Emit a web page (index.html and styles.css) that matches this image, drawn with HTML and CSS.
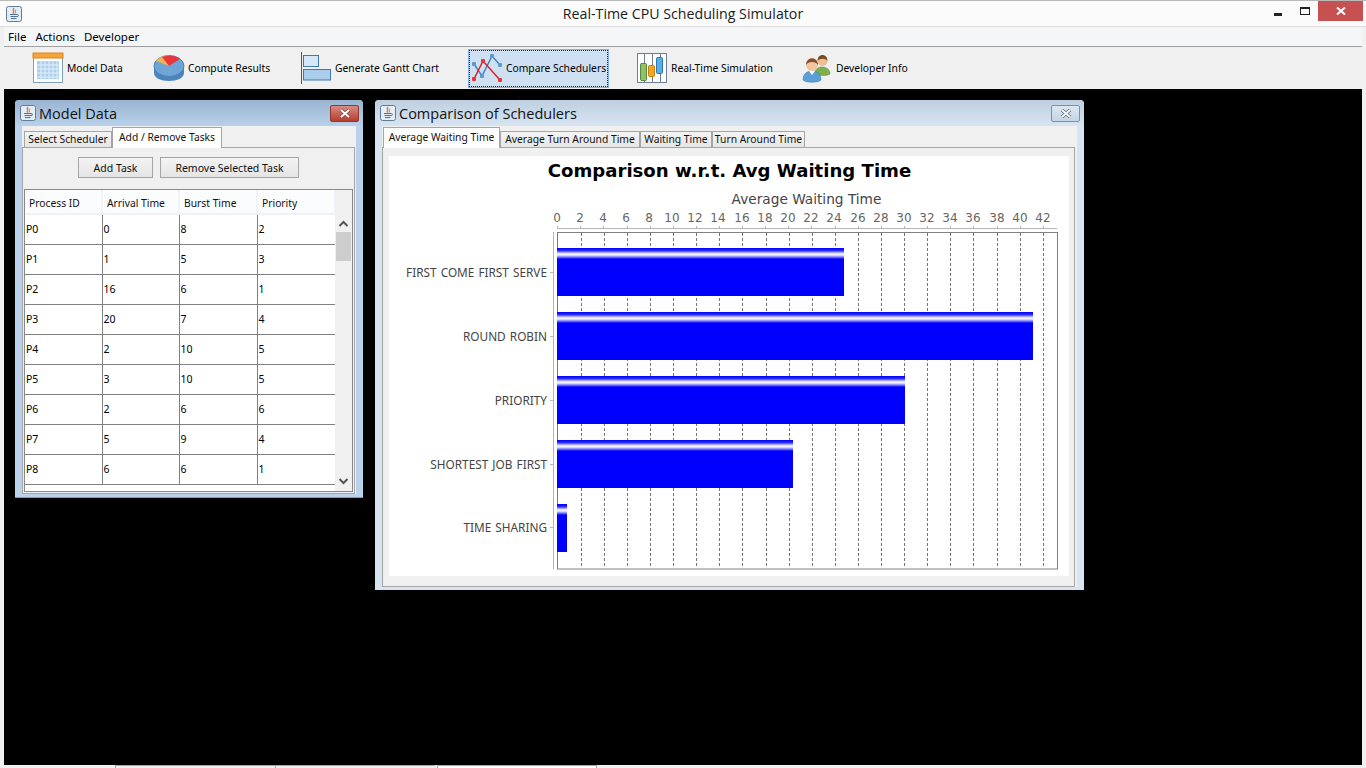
FILE: index.html
```html
<!DOCTYPE html>
<html lang="en">
<head>
  <meta charset="UTF-8" />
  <title>Real-Time CPU Scheduling Simulator</title>
  <link rel="stylesheet" href="styles.css">
</head>
<body>
  <svg class="defs" width="0" height="0">
    <defs>
      <symbol id="java" viewBox="0 0 16 16">
        <rect x="0.5" y="0.5" width="15" height="15" rx="2" fill="#e4ecf4" stroke="#5f7d9b"/>
        <path d="M8 2C6 4 9 5 7 7.500" fill="none" stroke="#e2762a" stroke-width="1.400"/>
        <path d="M10 3.500C8.500 5 10.500 5.500 9 7.500" fill="none" stroke="#e2762a"/>
        <path d="M4 8.500h7M4.500 10.500h6.500M5 12.500h5.500" stroke="#4d6f92"/>
        <path d="M11 8.500c2 0 2 2 0 2" fill="none" stroke="#4d6f92"/>
      </symbol>
      <linearGradient id="barShine" x1="0" y1="0" x2="0" y2="1">
        <stop offset="0" stop-color="#0000ff"/>
        <stop offset="0.05" stop-color="#2222ff"/>
        <stop offset="0.125" stop-color="#ffffff"/>
        <stop offset="0.16" stop-color="#ccccff"/>
        <stop offset="0.23" stop-color="#0000ff"/>
        <stop offset="1" stop-color="#0000ff"/>
      </linearGradient>
    </defs>
  </svg>

  <div class="frame">
    <header class="titlebar">
      <svg class="app-icon" width="16" height="16"><use href="#java"/></svg>
      <span class="app-title">Real-Time CPU Scheduling Simulator</span>
      <div class="win-controls">
        <span class="win-min"></span>
        <span class="win-max"></span>
        <span class="win-close">
          <svg width="10" height="8" viewBox="0 0 10 8"><path d="M1 0.500L9 7.500M9 0.500L1 7.500" stroke="#fff" stroke-width="2"/></svg>
        </span>
      </div>
    </header>

    <nav class="menubar">
      <span>File</span>
      <span>Actions</span>
      <span>Developer</span>
    </nav>

    <div class="toolbar">
      <div class="tool tool-model">
        <svg width="32" height="32" viewBox="0 0 32 32">
          <rect x="1.500" y="1.500" width="29" height="29" fill="#fff" stroke="#7f9db9"/>
          <rect x="1" y="1" width="30" height="5" fill="#f6a53c" stroke="#dd8420"/>
          <rect x="5" y="9" width="22" height="18" fill="#a9d0f0"/>
          <path d="M5 13h24M5 17h24M5 21h24M5 25h24M9 9v20M13 9v20M17 9v20M21 9v20M25 9v20" stroke="#e8eef5" stroke-width="1"/>
        </svg>
        <span>Model Data</span>
      </div>
      <div class="tool tool-results">
        <svg width="32" height="28" viewBox="0 0 32 28">
          <path d="M1 13v6c0 5 7 8 15 8s15-3 15-8v-6z" fill="#4a86bd"/>
          <ellipse cx="16" cy="12" rx="15" ry="10.500" fill="#6fa5d6" stroke="#4d83b3"/>
          <path d="M16 12L3 7C6 3 11 1.500 16 1.500z" fill="#eeb15c"/>
          <path d="M16 12L9 3C14 1 23 1 27 5z" fill="#e8383a"/>
        </svg>
        <span>Compute Results</span>
      </div>
      <div class="tool tool-gantt">
        <svg width="32" height="32" viewBox="0 0 32 32">
          <path d="M1.500 0v32" stroke="#555" stroke-width="1"/>
          <rect x="3.500" y="3.500" width="15" height="11" fill="#d5e8f7" stroke="#3f79ad"/>
          <rect x="3.500" y="17.500" width="27" height="10.500" fill="#a9cdea" stroke="#3f79ad"/>
        </svg>
        <span>Generate Gantt Chart</span>
      </div>
      <div class="tool tool-compare">
        <svg width="32" height="30" viewBox="0 0 32 30">
          <path d="M3 11L11 23L21 3L29 12" fill="none" stroke="#3f83c0" stroke-width="1.500"/>
          <path d="M3 26L12 8L29 27" fill="none" stroke="#dd2222" stroke-width="1.500"/>
          <g fill="#5c9bd1">
            <rect x="1" y="9" width="4" height="4" rx="1"/>
            <rect x="9" y="21" width="4" height="4" rx="1"/>
            <rect x="19" y="1" width="4" height="4" rx="1"/>
            <rect x="27" y="10" width="4" height="4" rx="1"/>
          </g>
          <g fill="#ee3333">
            <rect x="1" y="24" width="4" height="4" rx="1"/>
            <rect x="10" y="6" width="4" height="4" rx="1"/>
            <rect x="27" y="25" width="4" height="4" rx="1"/>
          </g>
        </svg>
        <span>Compare Schedulers</span>
      </div>
      <div class="tool tool-sim">
        <svg width="30" height="30" viewBox="0 0 30 30">
          <rect x="0.500" y="0.500" width="29" height="29" fill="#fff" stroke="#6d7f91"/>
          <path d="M7.500 1v28M15.500 1v28M23.500 1v28" stroke="#6d7f91"/>
          <rect x="3.500" y="10.500" width="6" height="17" rx="1" fill="#8fc06d" stroke="#4f8a36"/>
          <rect x="11.500" y="12.500" width="6" height="11" rx="1" fill="#f5a623" stroke="#c97f10"/>
          <rect x="19.500" y="4.500" width="6" height="16" rx="1" fill="#5aaee6" stroke="#2a78b0"/>
        </svg>
        <span>Real-Time Simulation</span>
      </div>
      <div class="tool tool-dev">
        <svg width="30" height="30" viewBox="0 0 30 30">
          <path d="M13 21c0-5 3-7 7-7s8 2 8 7c-3 2-12 2-15 0z" fill="#7fae4c" stroke="#5e8a33" stroke-width="0.500"/>
          <circle cx="20.500" cy="8" r="5" fill="#eebd91"/>
          <path d="M15.500 8c0-8 10-8 10 0c-2-3-8-3-10 0z" fill="#7a4a22"/>
          <path d="M1 27c0-6 4-9 9-9s9 3 9 9c-3 3-15 3-18 0z" fill="#5a9fd8" stroke="#2f74ad" stroke-width="0.500"/>
          <path d="M7 18l3 4l3-4z" fill="#fff"/>
          <circle cx="10" cy="12" r="6" fill="#f2c59b"/>
          <path d="M4 12c0-9 12-9 12 0c-2-4-10-4-12 0z" fill="#84512a"/>
        </svg>
        <span>Developer Info</span>
      </div>
    </div>

    <main class="desktop">
      <section class="inner-window model-window">
        <div class="inner-title">
          <svg width="16" height="16"><use href="#java"/></svg>
          <span class="inner-name">Model Data</span>
          <span class="inner-close">
            <svg width="14" height="11" viewBox="0 0 14 11"><path d="M3 2L11 9M11 2L3 9" stroke="#7c4640" stroke-width="3.400"/><path d="M3 2L11 9M11 2L3 9" stroke="#fff" stroke-width="2"/></svg>
          </span>
        </div>
        <div class="inner-body">
          <div class="tabs">
            <span class="tab tab-first">Select Scheduler</span>
            <span class="tab tab-active">Add / Remove Tasks</span>
          </div>
          <div class="tab-panel">
            <div class="task-buttons">
              <button class="btn btn-add">Add Task</button>
              <button class="btn btn-remove">Remove Selected Task</button>
            </div>
            <div class="table-pane">
              <div class="table-col">
                <table class="task-table">
                  <thead>
                    <tr><th>Process ID</th><th>Arrival Time</th><th>Burst Time</th><th>Priority</th></tr>
                  </thead>
                  <tbody>
                    <tr><td>P0</td><td>0</td><td>8</td><td>2</td></tr>
                    <tr><td>P1</td><td>1</td><td>5</td><td>3</td></tr>
                    <tr><td>P2</td><td>16</td><td>6</td><td>1</td></tr>
                    <tr><td>P3</td><td>20</td><td>7</td><td>4</td></tr>
                    <tr><td>P4</td><td>2</td><td>10</td><td>5</td></tr>
                    <tr><td>P5</td><td>3</td><td>10</td><td>5</td></tr>
                    <tr><td>P6</td><td>2</td><td>6</td><td>6</td></tr>
                    <tr><td>P7</td><td>5</td><td>9</td><td>4</td></tr>
                    <tr><td>P8</td><td>6</td><td>6</td><td>1</td></tr>
                  </tbody>
                </table>
              </div>
              <div class="scrollbar">
                <div class="scroll-corner"></div>
                <svg width="17" height="17" viewBox="0 0 17 17"><path d="M4.500 11L8.500 7L12.500 11" fill="none" stroke="#555" stroke-width="2"/></svg>
                <div class="scroll-thumb"></div>
                <div class="scroll-track"></div>
                <svg class="scroll-down" width="17" height="17" viewBox="0 0 17 17"><path d="M4.500 6L8.500 10L12.500 6" fill="none" stroke="#555" stroke-width="2"/></svg>
              </div>
            </div>
          </div>
        </div>
      </section>

      <section class="inner-window compare-window">
        <div class="inner-title">
          <svg width="16" height="16"><use href="#java"/></svg>
          <span class="inner-name">Comparison of Schedulers</span>
          <span class="inner-close">
            <svg width="14" height="11" viewBox="0 0 14 11"><path d="M3 2L11 9M11 2L3 9" stroke="#5e6f82" stroke-width="3.600"/><path d="M3 2L11 9M11 2L3 9" stroke="#f4f7fa" stroke-width="2"/></svg>
          </span>
        </div>
        <div class="inner-body">
          <div class="tabs">
            <span class="tab tab-active tab-avgwait">Average Waiting Time</span>
            <span class="tab tab-avgturn">Average Turn Around Time</span>
            <span class="tab tab-wait">Waiting Time</span>
            <span class="tab tab-turn">Turn Around Time</span>
          </div>
          <div class="tab-panel chart-panel">
            <div class="chart">
              <svg width="680" height="420" viewBox="389 156 680 420">
                <text class="chart-title" x="729.500" y="176.500">Comparison w.r.t. Avg Waiting Time</text>
                <text class="axis-title" x="806.500" y="204">Average Waiting Time</text>
                <g class="tick-labels">
                  <text x="557" y="222">0</text><text x="580" y="222">2</text><text x="603" y="222">4</text>
                  <text x="626" y="222">6</text><text x="649" y="222">8</text><text x="672" y="222">10</text>
                  <text x="695" y="222">12</text><text x="718" y="222">14</text><text x="742" y="222">16</text>
                  <text x="765" y="222">18</text><text x="788" y="222">20</text><text x="811" y="222">22</text>
                  <text x="834" y="222">24</text><text x="858" y="222">26</text><text x="881" y="222">28</text>
                  <text x="904" y="222">30</text><text x="927" y="222">32</text><text x="950" y="222">34</text>
                  <text x="973" y="222">36</text><text x="997" y="222">38</text><text x="1020" y="222">40</text>
                  <text x="1043" y="222">42</text>
                </g>
                <path d="M557 228.500H1057M553.500 232V569" stroke="#b5b5b5" fill="none"/>
                <path class="ticks" d="M557.500 226v2M580.500 226v2M603.500 226v2M627.500 226v2M650.500 226v2M673.500 226v2M696.500 226v2M719.500 226v2M742.500 226v2M765.500 226v2M788.500 226v2M811.500 226v2M835.500 226v2M858.500 226v2M881.500 226v2M904.500 226v2M927.500 226v2M950.500 226v2M973.500 226v2M997.500 226v2M1020.500 226v2M1043.500 226v2M550 272.500h3M550 336.500h3M550 400.500h3M550 464.500h3M550 527.500h3"/>
                <rect class="plot-frame" x="557.500" y="232.500" width="500" height="336.500"/>
                <path class="grid" d="M557.500 233V568M581.500 233V568M604.500 233V568M627.500 233V568M650.500 233V568M673.500 233V568M696.500 233V568M719.500 233V568M742.500 233V568M766.500 233V568M789.500 233V568M812.500 233V568M835.500 233V568M858.500 233V568M881.500 233V568M904.500 233V568M927.500 233V568M950.500 233V568M973.500 233V568M997.500 233V568M1020.500 233V568M1043.500 233V568"/>
                <rect class="bar" x="557" y="248" width="287" height="48"/>
                <rect class="bar" x="557" y="312" width="476" height="48"/>
                <rect class="bar" x="557" y="376" width="348" height="48"/>
                <rect class="bar" x="557" y="440" width="236" height="48"/>
                <rect class="bar" x="557" y="504" width="10" height="48"/>
                <g class="cat-labels">
                  <text x="547" y="277">FIRST COME FIRST SERVE</text>
                  <text x="547" y="341">ROUND ROBIN</text>
                  <text x="547" y="405">PRIORITY</text>
                  <text x="547" y="469">SHORTEST JOB FIRST</text>
                  <text x="547" y="532">TIME SHARING</text>
                </g>
              </svg>
            </div>
          </div>
        </div>
      </section>
    </main>

    <footer class="min-strip">
      <span></span><span></span><span class="strip-active"></span>
    </footer>
  </div>
</body>
</html>
```

FILE: styles.css
```css
* {
  box-sizing: border-box;
}

html, body {
  margin: 0;
  height: 100%;
  overflow: hidden;
}

body {
  font-family: "Noto Sans", "Liberation Sans", sans-serif;
  font-size: 10.300px;
  color: #000;
}

.defs {
  position: absolute;
}

.frame {
  width: 1366px;
  height: 768px;
  display: flex;
  flex-direction: column;
  background: #f0f0f0;
  border-top: 1px solid #b9b9b9;
}

/* main window chrome */
.titlebar {
  height: 26px;
  flex: none;
  display: flex;
  align-items: center;
  justify-content: center;
  position: relative;
  background: #fbfbfb;
  border-bottom: 1px solid #dcdcdc;
}

.app-icon {
  position: absolute;
  left: 6px;
  top: 5px;
}

.app-title {
  font-family: "Open Sans", sans-serif;
  font-size: 14.200px;
  color: #1c1c1c;
}

.win-controls {
  position: absolute;
  top: 0;
  right: 3px;
  display: flex;
}

.win-min {
  width: 8px;
  height: 3px;
  margin: 12px 18px 0 0;
  background: #222;
}

.win-max {
  width: 10px;
  height: 8px;
  margin: 6px 8px 0 0;
  border: 1px solid #222;
  border-top-width: 2px;
}

.win-close {
  width: 45px;
  height: 20px;
  display: flex;
  align-items: center;
  justify-content: center;
  background: #c75050;
}

.menubar {
  height: 20px;
  flex: none;
  display: flex;
  gap: 9px;
  align-items: center;
  margin: 0 4px;
  padding-left: 4px;
  font-size: 11.500px;
  background: #f4f5f7;
  border-bottom: 1px solid #a0a0a0;
}

.toolbar {
  height: 42px;
  flex: none;
  display: flex;
  align-items: center;
  margin: 0 4px;
  background: #f0f0f0;
}

.tool {
  display: flex;
  align-items: center;
  gap: 3px;
  height: 39px;
  white-space: nowrap;
}

.tool svg {
  flex: none;
}

.tool span {
  margin-top: -1px;
}

.tool-model { margin-left: 28px; width: 121px; }
.tool-results { width: 147px; }
.tool-gantt { width: 168px; }
.tool-compare {
  width: 141px;
  padding-left: 2px;
  background: #cfe0f2;
  border: 1px solid #7fb0e6;
  outline: 1px dotted #222;
  outline-offset: -2px;
}
.tool-sim { margin-left: 28px; width: 165px; }
.tool-sim span { margin-left: 1px; }
.tool-dev { width: 130px; }
.tool-dev span { margin-left: 1px; }

/* desktop and inner windows */
.desktop {
  flex: 1;
  position: relative;
  margin: 0 4px;
  background: #000;
}

.inner-window {
  position: absolute;
  display: flex;
  flex-direction: column;
  border-radius: 4px 4px 0 0;
}

.model-window {
  left: 11px;
  top: 11px;
  width: 348px;
  height: 398px;
  background: #b9d1ea;
  border-bottom: 1px solid #3fb5dd;
}

.compare-window {
  left: 371px;
  top: 11px;
  width: 709px;
  height: 490px;
  background: #d7e4f2;
}

.inner-title {
  height: 26px;
  flex: none;
  display: flex;
  align-items: center;
  gap: 3px;
  padding-left: 5px;
  border-radius: 4px 4px 0 0;
  background: linear-gradient(#99b4d1, #b9d1ea);
}

.compare-window .inner-title {
  background: linear-gradient(#bfcfdf, #d7e4f2);
}

.inner-name {
  font-family: "Open Sans", sans-serif;
  font-size: 14.500px;
  flex: 1;
  color: #111;
}

.inner-close {
  width: 29px;
  height: 17px;
  margin-right: 4px;
  display: flex;
  align-items: center;
  justify-content: center;
  border: 1px solid #8a3a35;
  border-radius: 2px;
  background: linear-gradient(#d98a82, #b83c30);
}

.compare-window .inner-close {
  border-color: #7d8fa3;
  background: linear-gradient(#dbe6f1, #c5d5e6);
}

.inner-body {
  flex: 1;
  display: flex;
  flex-direction: column;
  margin: 0 7px 3px 7px;
  padding-top: 1px;
  background: #f0f0f0;
}

.tabs {
  height: 20px;
  flex: none;
  display: flex;
  align-items: flex-end;
  padding-left: 2px;
}

.compare-window .tabs {
  padding-left: 1px;
}

.tab {
  height: 16px;
  padding-bottom: 1px;
  display: flex;
  align-items: center;
  justify-content: center;
  white-space: nowrap;
  color: #111;
  background: linear-gradient(#f4f4f4, #e6e6e6);
  border: 1px solid #a5a5a5;
  border-bottom: 0;
}

.tab-first { width: 88px; }

.tab-active {
  height: 21px;
  width: 110px;
  padding-bottom: 2px;
  position: relative;
  top: 1px;
  z-index: 1;
  background: #fff;
  border-color: #a5a5a5;
}

.tab-avgwait { width: 117px; }
.tab-avgturn { width: 140px; }
.tab-wait { width: 72px; }
.tab-turn { width: 93px; }

.tab-panel {
  flex: 1;
  min-height: 0;
  display: flex;
  flex-direction: column;
  margin-right: 1px;
  border: 1px solid #a5a5a5;
  background: #f0f0f0;
}

.task-buttons {
  height: 41px;
  flex: none;
  display: flex;
  align-items: flex-start;
  padding: 9px 0 0 55px;
  gap: 7px;
}

.btn {
  height: 21px;
  padding: 0;
  font-family: inherit;
  font-size: 10.500px;
  color: #111;
  background: linear-gradient(#f4f4f4, #e4e4e4);
  border: 1px solid #a5a5a5;
}

.btn-add { width: 75px; }
.btn-remove { width: 139px; }

.table-pane {
  flex: 1;
  min-height: 0;
  display: flex;
  margin: 0 1px 1px 1px;
  border: 1px solid #888;
  background: #f0f0f0;
}

.table-col {
  width: 310px;
  flex: none;
  background: #fff;
}

.task-table {
  width: 310px;
  table-layout: fixed;
  border-collapse: collapse;
}

.task-table th {
  width: 77px;
  height: 24px;
  padding: 2px 0 0 4px;
  text-align: left;
  font-weight: normal;
  color: #111;
  background: #fbfcfe;
  border-right: 2px solid #f0f4fa;
  border-bottom: 2px solid #edf2f9;
}

.task-table th:nth-child(n+3) {
  width: 78px;
}

.task-table td {
  height: 30px;
  padding: 0 0 0 1px;
  font-size: 10.500px;
  border-right: 1px solid #808080;
  border-bottom: 1px solid #808080;
}

.scrollbar {
  flex: 1;
  display: flex;
  flex-direction: column;
  background: #f0f0f0;
}

.scrollbar svg {
  flex: none;
}

.scroll-corner {
  height: 25px;
  flex: none;
}

.scroll-thumb {
  height: 29px;
  flex: none;
  margin: 0 1px;
  background: #cdcdcd;
}

.scroll-track {
  flex: 1;
}

.scroll-down {
  margin-bottom: 1px;
}

/* chart */
.chart-panel {
  padding: 8px 5px 10px 6px;
  margin-right: 2px;
}

.chart {
  width: 680px;
  height: 420px;
  background: #fff;
}

.chart svg {
  display: block;
}

.chart-title {
  font-family: "DejaVu Sans", sans-serif;
  font-size: 18.100px;
  font-weight: bold;
  text-anchor: middle;
  fill: #000;
}

.axis-title {
  font-family: "DejaVu Sans", sans-serif;
  font-size: 13.700px;
  text-anchor: middle;
  fill: #444;
}

.tick-labels text {
  font-family: "DejaVu Sans", sans-serif;
  font-size: 12px;
  text-anchor: middle;
  fill: #666;
}

.cat-labels text {
  font-family: "Noto Sans", sans-serif;
  font-size: 11.800px;
  word-spacing: 1px;
  text-anchor: end;
  fill: #444;
}

.ticks {
  stroke: #b5b5b5;
  fill: none;
}

.grid {
  stroke: #777;
  stroke-dasharray: 3 2;
  fill: none;
}

.plot-frame {
  fill: none;
  stroke: #808080;
}

.bar {
  fill: url(#barShine);
}

/* minimized frames along the bottom */
.min-strip {
  height: 3px;
  flex: none;
  display: flex;
  padding-left: 115px;
  background: #f0f0f0;
}

.min-strip span {
  width: 160px;
  border-top: 1px solid #a5a5a5;
  border-left: 1px solid #a5a5a5;
}

.min-strip .strip-active {
  border-right: 1px solid #a5a5a5;
  background: #fff;
  margin-left: 2px;
}
```
